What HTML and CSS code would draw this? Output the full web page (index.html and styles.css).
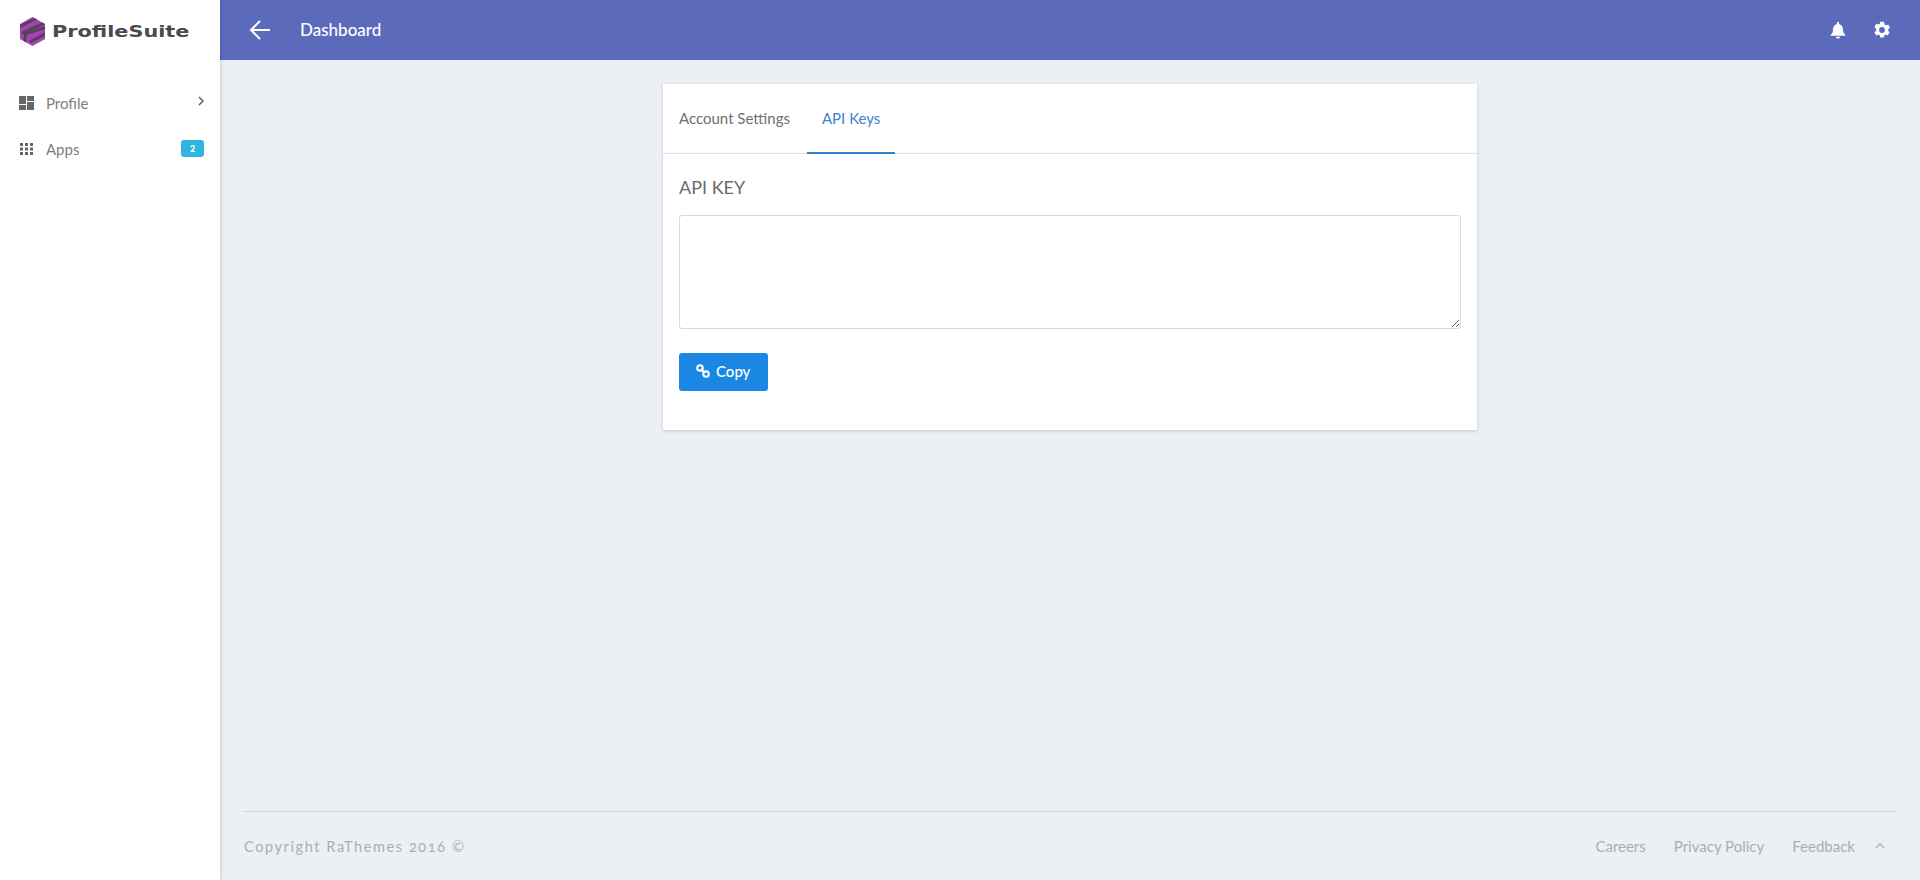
FILE: index.html
```html
<!DOCTYPE html>
<html lang="en">
<head>
<meta charset="utf-8">
<title>ProfileSuite</title>
<link rel="stylesheet" href="styles.css">
</head>
<body>
<div class="app">
  <aside class="sidebar">
    <div class="brand">
      <svg class="brand-logo" viewBox="0 0 25 29" width="25" height="29">
        <defs><clipPath id="hex"><polygon points="12.500,0 25,7 25,22 12.500,29 0,22 0,7"/></clipPath></defs>
        <polygon points="12.500,0 25,7 25,22 12.500,29 0,22 0,7" fill="#a83fb5"/>
        <g clip-path="url(#hex)" fill="none" stroke="#4b474f" stroke-width="2.800">
          <path d="M-1 10 L17 1"/>
          <path d="M2 16 L27 5"/>
          <path d="M5 26 L5 17 L27 10"/>
          <path d="M10 25 L27 16"/>
        </g>
      </svg>
      <span class="brand-name">ProfileSuite</span>
    </div>
    <nav class="nav">
      <a class="nav-item">
        <svg class="nav-icon" viewBox="0 0 15 14" width="15" height="14"><path d="M0 0h7v8H0zM0 9h7v5H0zM8 0h7v5H8zM8 6h7v8H8z" fill="#666"/></svg>
        <span class="nav-label">Profile</span>
        <svg class="nav-chevron" viewBox="0 0 8 10" width="8" height="10"><path d="M2 1l4 4-4 4" fill="none" stroke="#616161" stroke-width="1.500"/></svg>
      </a>
      <a class="nav-item">
        <svg class="nav-icon" viewBox="0 0 15 14" width="15" height="14"><path d="M1 1h3v3H1zM6 1h3v3H6zM11 1h3v3h-3zM1 5.500h3v3H1zM6 5.500h3v3H6zM11 5.500h3v3h-3zM1 10h3v3H1zM6 10h3v3H6zM11 10h3v3h-3z" fill="#666"/></svg>
        <span class="nav-label">Apps</span>
        <span class="badge">2</span>
      </a>
    </nav>
  </aside>
  <div class="main">
    <header class="topbar">
      <svg class="back" viewBox="0 0 22 22" width="22" height="22"><path d="M21 11H2M11 2l-9 9 9 9" fill="none" stroke="#fff" stroke-width="2"/></svg>
      <span class="page-title">Dashboard</span>
      <div class="topbar-actions">
        <svg viewBox="0 0 24 24" width="20" height="20"><path d="M12 22.500a2.600 2.600 0 0 0 2.600-2.400H9.400A2.600 2.600 0 0 0 12 22.500zM20.500 17.500c-1.500-1.300-2.500-3-2.500-6.500 0-3.200-2.200-5.600-4.700-6.300V3.500a1.300 1.300 0 0 0-2.600 0v1.200C8.200 5.400 6 7.800 6 11c0 3.500-1 5.200-2.500 6.500-.6.500-.3 1.400.5 1.400h16c.8 0 1.100-.9.500-1.400z" fill="#fff"/></svg>
        <svg viewBox="0 0 24 24" width="20" height="20"><path fill="#fff" fill-rule="evenodd" d="M19.400 13a7.700 7.700 0 0 0 0-2l2.200-1.700-2.200-3.800-2.600 1a7.500 7.500 0 0 0-1.700-1L14.200 2H9.800l-.4 2.500a7.500 7.500 0 0 0-1.700 1l-2.600-1-2.200 3.800L5.100 11a7.700 7.700 0 0 0 0 2l-2.200 1.700 2.200 3.800 2.600-1a7.500 7.500 0 0 0 1.700 1l.4 2.500h4.400l.4-2.500a7.500 7.500 0 0 0 1.700-1l2.600 1 2.200-3.800zM12 15.500a3.500 3.500 0 1 1 0-7 3.500 3.500 0 0 1 0 7z"/></svg>
      </div>
    </header>
    <main class="content">
      <section class="card">
        <div class="tabs">
          <a class="tab">Account Settings</a>
          <a class="tab tab-active">API Keys</a>
        </div>
        <div class="card-body">
          <h2 class="field-title">API KEY</h2>
          <textarea class="key-input"></textarea>
          <button class="copy-btn" type="button">
            <svg viewBox="0 0 14 14" width="14" height="14"><g fill="none" stroke="#fff" stroke-width="2"><circle cx="4" cy="4" r="2.800"/><circle cx="10" cy="10" r="2.800"/></g><path d="M5 5l4 4" stroke="#fff" stroke-width="2"/></svg>
            <span>Copy</span>
          </button>
        </div>
      </section>
    </main>
    <footer class="footer">
      <span class="copyright">Copyright RaThemes 2016 ©</span>
      <div class="footer-links">
        <a>Careers</a>
        <a>Privacy Policy</a>
        <a>Feedback</a>
        <svg class="to-top" viewBox="0 0 10 6" width="10" height="6"><path d="M1 5l4-4 4 4" fill="none" stroke="#a9adb5" stroke-width="1.300"/></svg>
      </div>
    </footer>
  </div>
</div>
</body>
</html>
```
FILE: styles.css
```css
* { box-sizing: border-box; }
html, body { margin: 0; height: 100%; }
body {
  font-family: "Lato", "Open Sans", sans-serif;
  font-size: 14px;
  color: #616161;
  background: #ecf0f5;
  overflow: hidden;
}
.app { display: flex; height: 880px; }
.sidebar {
  width: 220px;
  flex: none;
  background: #fff;
  box-shadow: 1px 0 3px rgba(0,0,0,.15);
  position: relative;
  z-index: 1;
}
.brand {
  height: 60px;
  display: flex;
  align-items: center;
  gap: 7px;
  padding: 2px 0 0 20px;
}
.brand-name {
  font-family: "DejaVu Sans", sans-serif;
  font-weight: 700;
  font-size: 16px;
  color: #4a4a4e;
  display: inline-block;
  transform: scaleX(1.3);
  transform-origin: left center;
}
.nav { display: flex; flex-direction: column; padding-top: 23px; gap: 6px; }
.nav-item {
  display: flex;
  align-items: center;
  height: 40px;
  padding: 0 16px 0 19px;
  color: #7d7d7d;
  font-size: 15px;
}
.nav-icon { flex: none; margin-right: 12px; }
.nav-label { flex: 1; }
.nav-chevron { margin-bottom: 4px; margin-right: -1px; }
.badge {
  width: 23px;
  height: 17px;
  border-radius: 3px;
  background: #2fb5e0;
  color: #fff;
  font-size: 9px;
  font-weight: 900;
  line-height: 17px;
  text-align: center;
  margin-bottom: 1px;
}
.main { flex: 1; display: flex; flex-direction: column; min-width: 0; }
.topbar {
  height: 60px;
  flex: none;
  background: #5c6abc;
  display: flex;
  align-items: center;
  padding: 0 28px 0 29px;
  color: #fff;
}
.back { flex: none; margin-right: 29px; }
.page-title { font-size: 17px; font-weight: 500; flex: 1; padding-bottom: 2px; }
.topbar-actions { display: flex; align-items: center; gap: 24px; }
.content { flex: 1; padding: 24px; display: flex; justify-content: center; align-items: flex-start; }
.card {
  width: 814px;
  height: 346px;
  background: #fff;
  box-shadow: 0 1px 3px rgba(0,0,0,.18);
}
.tabs { display: flex; height: 70px; padding: 0; border-bottom: 1px solid #dcdfe3; }
.tab {
  height: 70px;
  padding: 0 16px 2px;
  display: flex;
  align-items: center;
  font-size: 15px;
  color: #6f6f6f;
  white-space: nowrap;
}
.tab-active { color: #3f82cf; border-bottom: 2px solid #2a84d2; padding: 0 15px; margin-left: 1px; }
.card-body { padding: 22px 16px 0; }
.field-title { margin: 0; font-size: 18px; font-weight: 400; color: #6a6a6a; line-height: 22px; }
.key-input {
  display: block;
  width: 100%;
  height: 114px;
  margin: 17px 0 24px;
  border: 1px solid #d9d9d9;
  border-radius: 3px;
  background: #fff;
}
.copy-btn {
  display: flex;
  align-items: center;
  gap: 6px;
  width: 89px;
  height: 38px;
  padding: 0 0 2px 17px;
  background: #1a88e2;
  color: #fff;
  border: 0;
  border-radius: 3px;
  font: 500 15px "Lato", sans-serif;
}
.footer {
  height: 69px;
  flex: none;
  margin: 0 24px;
  border-top: 1px solid #ced2d9;
  display: flex;
  align-items: center;
  justify-content: space-between;
  color: #a9adb5;
}
.copyright { letter-spacing: 1.6px; font-size: 14.5px; font-variant-numeric: oldstyle-nums; }
.footer-links { display: flex; align-items: center; gap: 28px; font-size: 15px; padding-right: 11px; }
.to-top { margin-left: -8px; }
```
